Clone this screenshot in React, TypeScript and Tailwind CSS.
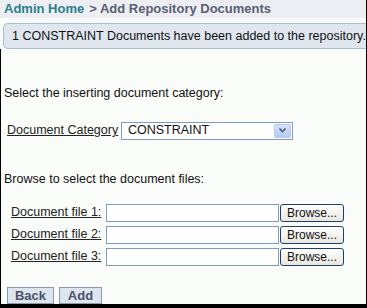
import React from "react";

const font = { fontFamily: '"Liberation Sans", Arial, sans-serif' };

const FileRow = ({ n }: { n: number }) => (
  <div className="flex h-[22px] items-center">
    <span className="w-[105px] pl-[10px] text-[12.5px] text-[#222] underline">
      Document file {n}:
    </span>
    <div className="h-[18px] w-[173px] border border-[#7f9db9] bg-white" />
    <button className="ml-[1px] h-[18px] w-[64px] rounded-[3px] border border-[#1c3f6e] bg-gradient-to-b from-white to-[#e8e6dc] text-[12px] leading-none text-[#111]">
      Browse...
    </button>
  </div>
);

export default function App() {
  return (
    <div className="flex h-[308px] w-[367px] bg-black" style={font}>
      <div className="mb-[4px] mr-[3px] flex flex-1 flex-col bg-[#fafcfa]">
        <div className="flex h-[18px] items-center bg-[#eceef3] pl-[4px] text-[13px] font-bold">
          <span className="text-[#2b7f8c]">Admin Home</span>
          <span className="ml-[5px] text-[#5a5e70]">&gt; Add Repository Documents</span>
        </div>
        <div className="ml-[3px] mt-[5px] flex h-[26px] items-center rounded-l-[5px] border border-r-0 border-[#a8bcd2] bg-[#dfe6ee] pl-[8px] text-[12.5px] whitespace-nowrap text-[#111]">
          1 CONSTRAINT Documents have been added to the repository.
        </div>
        <div className="flex flex-1 flex-col border-l border-black pt-[35px] text-[12.5px] text-[#111]">
          <div className="pl-[3px]">Select the inserting document category:</div>
          <div className="mt-[19px] flex h-[18px] items-center">
            <span className="w-[120px] pl-[6px] text-[#222] underline">Document Category</span>
            <div className="flex h-[18px] w-[172px] items-center border border-[#7f9db9] bg-white pl-[6px] pr-[1px]">
              <span className="flex-1">CONSTRAINT</span>
              <span className="flex h-[14px] w-[17px] items-center justify-center rounded-[2px] border border-[#b6c9ee] bg-gradient-to-b from-[#d6e2fb] to-[#b5c9f2]">
                <svg width="7" height="5" viewBox="0 0 7 5">
                  <path d="M0.5 0.5 L3.5 3.5 L6.5 0.5" fill="none" stroke="#4d6185" strokeWidth="1.6" />
                </svg>
              </span>
            </div>
          </div>
          <div className="mt-[30px] pl-[3px]">Browse to select the document files:</div>
          <div className="mt-[13px] flex flex-col">
            <FileRow n={1} />
            <FileRow n={2} />
            <FileRow n={3} />
          </div>
          <div className="mt-[19px] flex gap-[5px] pl-[6px]">
            <button className="h-[17px] w-[47px] border border-[#8d98a8] bg-[#dde6ef] text-[13px] font-bold leading-none text-[#4a5366]">
              Back
            </button>
            <button className="h-[17px] w-[43px] border border-[#8d98a8] bg-[#dde6ef] text-[13px] font-bold leading-none text-[#4a5366]">
              Add
            </button>
          </div>
        </div>
      </div>
    </div>
  );
}
